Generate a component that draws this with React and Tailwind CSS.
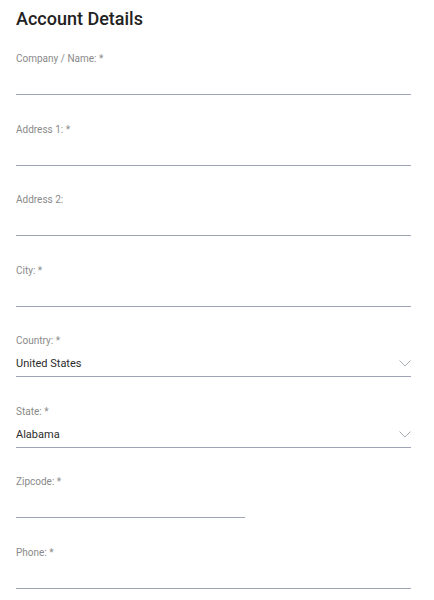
const fields = [
  { label: 'Company / Name: *' },
  { label: 'Address 1: *' },
  { label: 'Address 2:' },
  { label: 'City: *' },
  { label: 'Country: *', value: 'United States', select: true },
  { label: 'State: *', value: 'Alabama', select: true },
  { label: 'Zipcode: *', short: true },
  { label: 'Phone: *' },
];

function Field({ label, value, select, short }) {
  return (
    <div className="mb-[27.5px]">
      <div className="text-[10px] leading-[12px] text-[#8a8a8a] pt-[1px]">{label}</div>
      <div
        className={`flex items-center justify-between h-[30px] border-b border-[#9ea6b6] ${short ? 'w-[229px]' : 'w-[395px]'}`}
      >
        <span className="text-[11px] text-[#2b2b2b] pt-[6px]">{value}</span>
        {select && (
          <svg width="12" height="7" viewBox="0 0 12 7" className="mt-[4px]">
            <path d="M0.5 0.5 L6 6 L11.5 0.5" fill="none" stroke="#a8acb4" strokeWidth="1" />
          </svg>
        )}
      </div>
    </div>
  );
}

export default function App() {
  return (
    <div className="w-[434px] h-[600px] overflow-hidden bg-white px-4 pt-[7px]" style={{ fontFamily: 'Roboto, "Liberation Sans", sans-serif' }}>
      <h1 className="text-[18px] leading-[24px] font-medium text-[#222] mb-[21px]">Account Details</h1>
      {fields.map((f, i) => (
        <Field key={i} {...f} />
      ))}
    </div>
  );
}
